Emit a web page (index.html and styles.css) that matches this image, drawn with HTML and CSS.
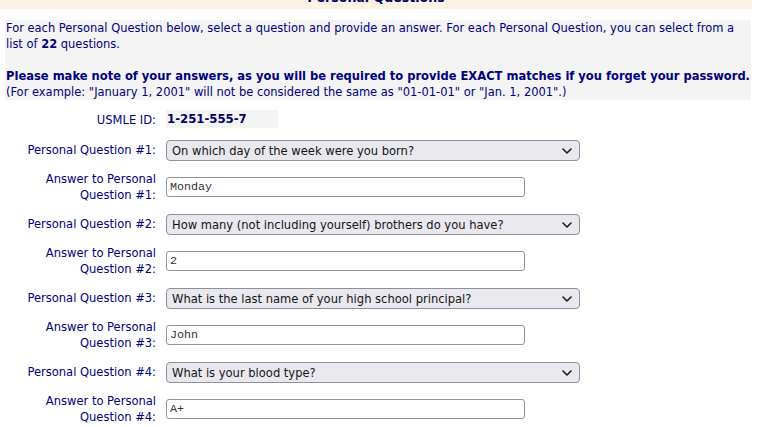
FILE: index.html
```html
<!DOCTYPE html>
<html>
<head>
<meta charset="utf-8">
<link rel="stylesheet" href="styles.css">
</head>
<body>
<div class="page">
  <div class="title-band"><h2 class="title">Personal Questions</h2></div>
  <div class="intro">
    <p>For each Personal Question below, select a question and provide an answer. For each Personal Question, you can select from a list of <b>22</b> questions.</p>
    <p><b class="warn">Please make note of your answers, as you will be required to provide EXACT matches if you forget your password.</b><br>(For example: "January 1, 2001" will not be considered the same as "01-01-01" or "Jan. 1, 2001".)</p>
  </div>
  <div class="form">
    <div class="label id-label">USMLE ID:</div>
    <div class="id-value"><span class="id-box">1-251-555-7</span></div>

    <div class="label">Personal Question #1:</div>
    <div class="ctrl"><div class="sel"><span class="sel-text">On which day of the week were you born?</span><svg class="chev" width="10" height="6" viewBox="0 0 10 6"><path d="M1 1 L5 5 L9 1" fill="none" stroke="#1b1b1b" stroke-width="1.6" stroke-linecap="round" stroke-linejoin="round"/></svg></div></div>
    <div class="label">Answer to Personal Question #1:</div>
    <div class="ctrl"><div class="inp">Monday</div></div>

    <div class="label">Personal Question #2:</div>
    <div class="ctrl"><div class="sel"><span class="sel-text">How many (not including yourself) brothers do you have?</span><svg class="chev" width="10" height="6" viewBox="0 0 10 6"><path d="M1 1 L5 5 L9 1" fill="none" stroke="#1b1b1b" stroke-width="1.6" stroke-linecap="round" stroke-linejoin="round"/></svg></div></div>
    <div class="label">Answer to Personal Question #2:</div>
    <div class="ctrl"><div class="inp">2</div></div>

    <div class="label">Personal Question #3:</div>
    <div class="ctrl"><div class="sel"><span class="sel-text">What is the last name of your high school principal?</span><svg class="chev" width="10" height="6" viewBox="0 0 10 6"><path d="M1 1 L5 5 L9 1" fill="none" stroke="#1b1b1b" stroke-width="1.6" stroke-linecap="round" stroke-linejoin="round"/></svg></div></div>
    <div class="label">Answer to Personal Question #3:</div>
    <div class="ctrl"><div class="inp">John</div></div>

    <div class="label">Personal Question #4:</div>
    <div class="ctrl"><div class="sel"><span class="sel-text">What is your blood type?</span><svg class="chev" width="10" height="6" viewBox="0 0 10 6"><path d="M1 1 L5 5 L9 1" fill="none" stroke="#1b1b1b" stroke-width="1.6" stroke-linecap="round" stroke-linejoin="round"/></svg></div></div>
    <div class="label">Answer to Personal Question #4:</div>
    <div class="ctrl"><div class="inp">A+</div></div>
  </div>
</div>
</body>
</html>
```
FILE: styles.css
```css
html, body {
  margin: 0;
  padding: 0;
  background: #ffffff;
}
body {
  font-family: "DejaVu Sans Condensed", "DejaVu Sans", sans-serif;
  font-size: 13px;
  color: #000080;
}
.page {
  width: 759px;
  margin-top: -21px;
}
.title-band {
  width: 752px;
  height: 30px;
  background: #fdf3e4;
  display: flex;
  align-items: center;
  justify-content: center;
}
.title {
  margin: 0;
  font-size: 14px;
  font-weight: bold;
  color: #000066;
  line-height: 16px;
  padding-top: 6px;
}
.intro {
  margin: 11px 8px 0 5px;
  background: #f4f4f5;
  padding: 0 1px;
  width: 744px;
  font-size: 12.75px;
}
.intro p {
  margin: 0;
  line-height: 16px;
}
.intro p + p {
  margin-top: 16px;
}
.warn {
  white-space: nowrap;
  font-size: 12.8px;
}
.form {
  display: grid;
  grid-template-columns: 151px auto;
  column-gap: 10px;
  row-gap: 10.5px;
  padding-left: 5px;
  margin-top: 10px;
  align-items: center;
  justify-items: start;
}
.label {
  justify-self: end;
  text-align: right;
  line-height: 16px;
  font-size: 12.8px;
}
.id-value {
  height: 18px;
  margin-bottom: 1px;
}
.id-box {
  display: inline-block;
  background: #f4f4f5;
  width: 112px;
  height: 18px;
  line-height: 18px;
  font-weight: bold;
  color: #000066;
  padding-left: 1px;
  box-sizing: border-box;
}
.ctrl {
  display: flex;
  align-items: center;
}
.sel {
  position: relative;
  width: 414px;
  height: 21px;
  box-sizing: border-box;
  border: 1px solid #8f8f9d;
  border-radius: 4px;
  background: #e9e9ed;
  color: #15141a;
  display: flex;
  align-items: center;
  padding-left: 5px;
  font-family: "DejaVu Sans Condensed", "DejaVu Sans", sans-serif;
  font-size: 12.8px;
}
.chev {
  position: absolute;
  right: 7px;
  top: 7px;
}
.inp {
  width: 359px;
  height: 20px;
  box-sizing: border-box;
  border: 1px solid #8f8f9d;
  border-radius: 3px;
  background: #fff;
  color: #333;
  font-family: "Liberation Mono", monospace;
  font-size: 11.7px;
  line-height: 18px;
  padding-left: 3px;
}
```
